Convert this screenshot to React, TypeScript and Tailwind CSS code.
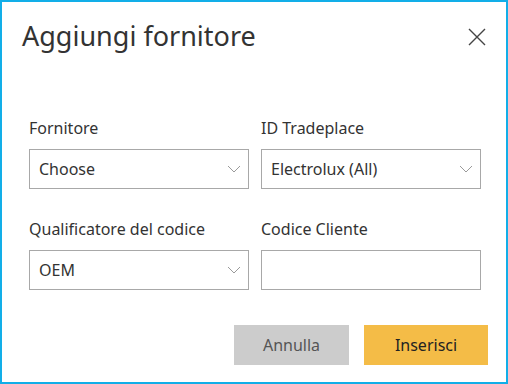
import React from 'react';

function Chevron() {
  return (
    <svg width="14" height="8" viewBox="0 0 14 8" fill="none" className="shrink-0">
      <path d="M1 1l6 6 6-6" stroke="#9a9a9a" strokeWidth="1" />
    </svg>
  );
}

interface FieldProps {
  label: string;
  value?: string;
  select?: boolean;
}

function Field({ label, value, select }: FieldProps) {
  return (
    <div className="flex flex-col">
      <label className="text-[16px] leading-[20px] text-[#333333] mb-[11px]">{label}</label>
      <div className="h-[40px] border border-[#a8a8a8] bg-white flex items-center justify-between pl-[9px] pr-[7px]">
        <span className="text-[16px] text-[#333333]">{value}</span>
        {select && <Chevron />}
      </div>
    </div>
  );
}

export default function App() {
  return (
    <div
      className="w-[508px] h-[384px] bg-white border-2 border-[#12aee8] flex flex-col"
      style={{ fontFamily: '"Noto Sans", "Open Sans", sans-serif' }}
    >
      <div className="flex items-center justify-between pl-[20px] pr-[20px] pt-[14px]">
        <h2 className="text-[27px] leading-[40px] text-[#333333]">Aggiungi fornitore</h2>
        <svg width="18" height="18" viewBox="0 0 18 18" fill="none" className="mt-[1px]">
          <path d="M1 1l16 16M17 1L1 17" stroke="#444444" strokeWidth="1.4" />
        </svg>
      </div>

      <div className="grid grid-cols-[220px_220px] gap-x-[12px] gap-y-[30px] pl-[27px] mt-[62px]">
        <Field label="Fornitore" value="Choose" select />
        <Field label="ID Tradeplace" value="Electrolux (All)" select />
        <Field label="Qualificatore del codice" value="OEM" select />
        <Field label="Codice Cliente" />
      </div>

      <div className="flex justify-end gap-[15px] pr-[18px] mt-[35px]">
        <button className="w-[115px] h-[40px] bg-[#cccccc] text-[16px] text-[#555555]">Annulla</button>
        <button className="w-[124px] h-[40px] bg-[#f4bc47] text-[16px] text-[#222222]">Inserisci</button>
      </div>
    </div>
  );
}
